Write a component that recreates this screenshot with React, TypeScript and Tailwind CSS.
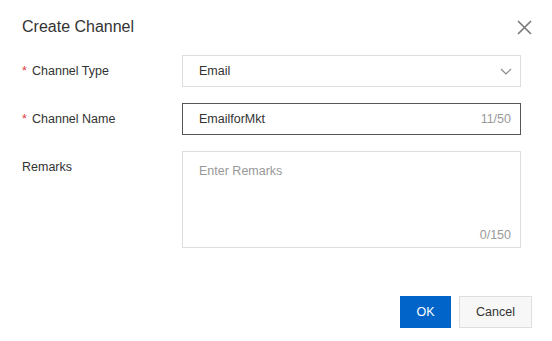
import { useState } from "react";

function Label({ text, required }: { text: string; required?: boolean }) {
	return (
		<div className="flex h-8 w-[160px] shrink-0 items-center text-[12.5px] text-[#333]">
			{required ? (
				<span className="mr-[4px] w-[6px] text-[#e4393c]">*</span>
			) : null}
			<span>{text}</span>
		</div>
	);
}

export default function App() {
	const [name, setName] = useState("EmailforMkt");
	const [remarks, setRemarks] = useState("");

	return (
		<div
			className="flex h-[341px] w-[552px] flex-col bg-white text-[#333]"
			style={{ fontFamily: '"Liberation Sans", Arial, sans-serif' }}
		>
			{/* Header */}
			<div className="flex items-center justify-between pt-[16px] pr-[20px] pl-[22px]">
				<h2 className="text-[16px] leading-[22px] text-[#333]">Create Channel</h2>
				<button type="button" className="flex h-[16px] w-[16px] items-center justify-center text-[#777]">
					<svg width="15" height="15" viewBox="0 0 15 15" fill="none">
						<path d="M1 1L14 14M14 1L1 14" stroke="currentColor" strokeWidth="1.6" />
					</svg>
				</button>
			</div>

			{/* Form */}
			<div className="flex flex-col gap-4 pt-[17px] pr-[31px] pl-[22px]">
				<div className="flex">
					<Label text="Channel Type" required />
					<div className="flex h-8 flex-1 items-center justify-between border border-[#dedede] pr-[8px] pl-[16px] text-[12.5px]">
						<span>Email</span>
						<svg width="12" height="7" viewBox="0 0 12 7" fill="none" className="text-[#888]">
							<path d="M1 1L6 6L11 1" stroke="currentColor" strokeWidth="1.2" />
						</svg>
					</div>
				</div>

				<div className="flex">
					<Label text="Channel Name" required />
					<div className="flex h-8 flex-1 items-center border border-[#555] pr-[9px] pl-[16px] text-[12.5px]">
						<input
							value={name}
							onChange={(e) => setName(e.target.value)}
							className="min-w-0 flex-1 bg-transparent text-[#333] outline-none"
						/>
						<span className="text-[#999]">{name.length}/50</span>
					</div>
				</div>

				<div className="flex">
					<Label text="Remarks" />
					<div className="flex h-[97px] flex-1 flex-col border border-[#dedede] pt-[10px] pr-[9px] pb-[3px] pl-[16px] text-[12.5px]">
						<textarea
							value={remarks}
							onChange={(e) => setRemarks(e.target.value)}
							placeholder="Enter Remarks"
							className="flex-1 resize-none bg-transparent leading-[18px] text-[#333] outline-none placeholder:text-[#999]"
						/>
						<span className="self-end leading-[18px] text-[#999]">{remarks.length}/150</span>
					</div>
				</div>
			</div>

			{/* Footer */}
			<div className="flex justify-end gap-2 pt-[48px] pr-[20px]">
				<button type="button" className="h-8 w-[51px] bg-[#0064c8] text-[12.5px] text-white">
					OK
				</button>
				<button
					type="button"
					className="h-8 w-[73px] border border-[#dedede] bg-[#f7f7f7] text-[12.5px] text-[#333]"
				>
					Cancel
				</button>
			</div>
		</div>
	);
}
